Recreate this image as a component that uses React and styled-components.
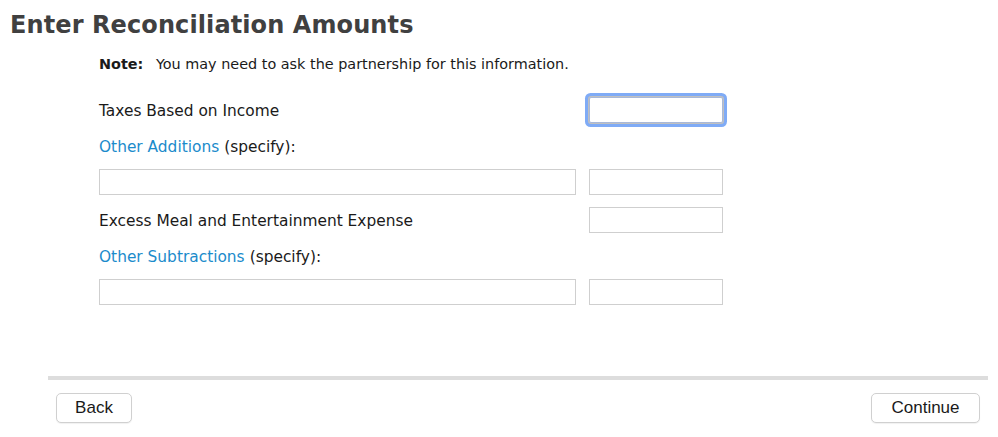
import React from "react";
import styled, { createGlobalStyle } from "styled-components";

const GlobalStyle = createGlobalStyle`
  html, body {
    margin: 0;
    padding: 0;
    background: #ffffff;
  }
  body {
    font-family: "DejaVu Sans", "Open Sans", sans-serif;
    color: #1a1a1a;
  }
`;

export const Page = styled.div`
  width: 998px;
  height: 437px;
  display: flex;
  flex-direction: column;
  box-sizing: border-box;
`;

export const Title = styled.h1`
  margin: 0;
  padding: 8px 0 0 10px;
  height: 36px;
  font-size: 24px;
  line-height: 34px;
  font-weight: bold;
  color: #404040;
  letter-spacing: 0.1px;
`;

export const Body = styled.section`
  padding: 10px 0 0 99px;
  display: flex;
  flex-direction: column;
`;

export const Note = styled.p`
  margin: 0 0 23px 0;
  height: 20px;
  font-size: 14.4px;
  line-height: 20px;
  b {
    margin-right: 8px;
  }
`;

export const Form = styled.div`
  display: grid;
  grid-template-columns: 477px 134px;
  column-gap: 13px;
  row-gap: 10px;
`;

export const Label = styled.div`
  grid-column: ${p => (p.$full ? "1 / span 2" : "1")};
  height: 26px;
  display: flex;
  align-items: center;
  font-size: 15.4px;
  margin-top: ${p => (p.$spaced ? "2px" : "0")};
  padding-top: 1px;
  box-sizing: border-box;
`;

export const Link = styled.span`
  color: #1b8bcb;
  margin-right: 5px;
`;

export const Field = styled.input`
  box-sizing: border-box;
  height: 26px;
  width: 100%;
  background: #fff;
  outline: none;
  margin: 0;
  margin-top: ${p => (p.$spaced ? "2px" : "0")};
  border: 1px solid ${p => (p.$focused ? "#a8b8d8" : "#cfcfcf")};
  border-radius: ${p => (p.$focused ? "2px" : "0")};
  box-shadow: ${p => (p.$focused ? "0 0 0 1px #c0c0c0, 0 0 0 4px #7fabf6" : "none")};
`;

export const Divider = styled.hr`
  margin: 71px 10px 0 48px;
  border: none;
  height: 4px;
  background: #dddddd;
`;

export const Footer = styled.footer`
  display: flex;
  justify-content: space-between;
  padding: 13px 18px 0 56px;
`;

export const Button = styled.button`
  height: 30px;
  padding: 0 ${p => (p.$wide ? "17px" : "14px")};
  min-width: ${p => (p.$wide ? "109px" : "76px")};
  background: #fff;
  border: 1px solid #d0d0d0;
  border-radius: 5px;
  box-shadow: 0 1px 1px rgba(0, 0, 0, 0.06);
  font-family: "Liberation Sans", Arial, sans-serif;
  font-size: 17px;
  color: #1a1a1a;
`;

export default function App() {
  return (
    <Page>
      <GlobalStyle />
      <Title>Enter Reconciliation Amounts</Title>
      <Body>
        <Note>
          <b>Note:</b> You may need to ask the partnership for this information.
        </Note>
        <Form>
          <Label>Taxes Based on Income</Label>
          <Field $focused />
          <Label $full>
            <Link>Other Additions</Link>(specify):
          </Label>
          <Field />
          <Field />
          <Label $spaced>Excess Meal and Entertainment Expense</Label>
          <Field $spaced />
          <Label $full>
            <Link>Other Subtractions</Link>(specify):
          </Label>
          <Field />
          <Field />
        </Form>
      </Body>
      <Divider />
      <Footer>
        <Button>Back</Button>
        <Button $wide>Continue</Button>
      </Footer>
    </Page>
  );
}
